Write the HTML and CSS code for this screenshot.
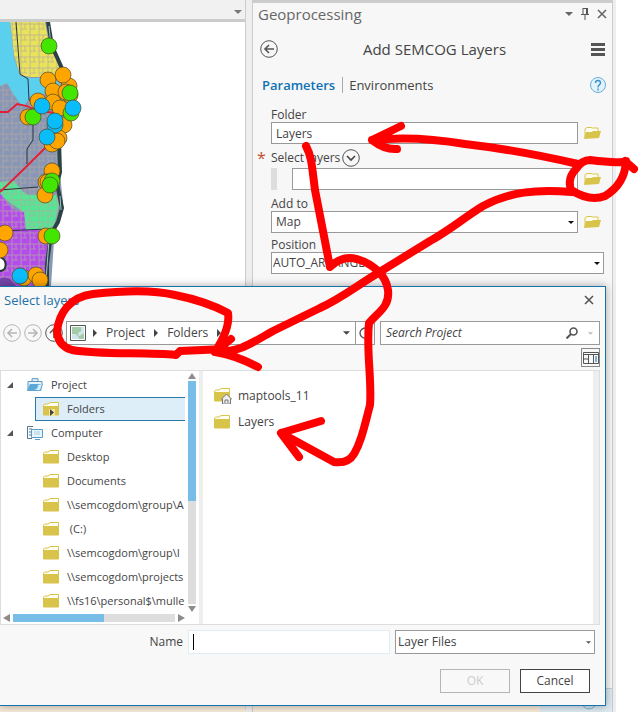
FILE: index.html
```html
<!DOCTYPE html>
<html lang="en">

<head>
    <meta charset="UTF-8">
    <meta name="viewport" content="width=device-width, initial-scale=1.0">
    <title>Geoprocessing</title>
    <link rel="stylesheet" href="styles.css">
</head>

<body>
    <!-- shared icons -->
    <svg class="defs" width="0" height="0">
        <symbol id="folder" viewBox="0 0 16 14">
            <path d="M.5 13V3L2 2h3l2-1.500h8.500V13z" fill="#fffdf0" stroke="#d8c44a" />
            <path d="M0 4h16v9H0z" fill="#d8c44a" />
        </symbol>
        <symbol id="folder-open" viewBox="0 0 17 14">
            <path d="M1 12V3l2-1.500h4L8.500 2H14v4" fill="#fffdf0" stroke="#d8c44a" />
            <path d="M0 13L2 6h6l1-1h8l-2 7z" fill="#d8c44a" />
        </symbol>
        <symbol id="down" viewBox="0 0 8 4">
            <path d="M0 0h8L4 4z" fill="currentColor" />
        </symbol>
        <symbol id="right" viewBox="0 0 4 8">
            <path d="M0 0l4 4-4 4z" fill="currentColor" />
        </symbol>
        <symbol id="arrow" viewBox="0 0 18 18">
            <circle cx="9" cy="9" r="8.300" fill="none" stroke="currentColor" />
            <path d="M14 9H5M9 5L5 9 9 13" fill="none" stroke="currentColor" stroke-width="1.600" />
        </symbol>
        <symbol id="close" viewBox="0 0 10 10">
            <path d="M1 1l8 8M9 1L1 9" stroke="currentColor" stroke-width="1.600" />
        </symbol>
    </svg>

    <div class="app">
        <div class="map-view">
            <div class="map-tabs"><svg width="8" height="4"><use href="#down" /></svg></div>
            <svg class="map" width="90" height="264" viewBox="0 22 90 264">
                <defs>
                    <pattern id="streets" width="9" height="11" patternUnits="userSpaceOnUse">
                        <path d="M0 2h9M3 0v11M7 2v5M3 7h6" fill="none" stroke="#b5a9a0" stroke-width=".7" />
                    </pattern>
                </defs>
                <path d="M0 22h48l6 26 10 20 10 30-8 20-6 20-1 30 2 16 2 18-8 24-4 60H0z" fill="#8797b5" />
                <path d="M10 22h35l5 27 12 18-7 10H30l-10-2-6-20z" fill="#e9e35a" />
                <path d="M0 182l14-1 8 10 6 4h28l3 10-6 25-30 0-2-20-12-8-9-8z" fill="#55e695" />
                <path d="M0 193l12 16 12 3 2 18h22l-2 56H0z" fill="#b44cec" />
                <path d="M0 22h48l6 26 10 20 8 30-12 40-1 30 2 16-2 38-11 28-2 56H0z" fill="url(#streets)" />
                <path d="M0 22h10l4 36 6 18 10 2h25l6 8-10 6-21 5-7 10-9-12-7-12-7 3z" fill="#5bd0ee" />
                <path d="M16 22l4 52 8 5 1 21 5 5M33 110v30l-6 9v15M0 190l38-3M0 231l48-2" fill="none" stroke="#2b3440" />
                <path d="M48 22l4 24 8 18 8 20M59 140l1 32-3 12 5 24-4 14-7 12-4 30v22" fill="none" stroke="#2c4145" stroke-width="4" />
                <path d="M49 26l2 20M60 196l1 14M49 240l-3 40" stroke="#a3c3bd" stroke-width="1" />
                <path d="M0 112h8l9-8 10 2 10 5 20 2M0 192l25-24 22-22" fill="none" stroke="#e31e36" stroke-width="1.800" />
                <path d="M0 257c8 3 7 14 0 14" fill="#fff" stroke="#26323a" stroke-width="2" />
                <path d="M0 279q8-5 16 7H0z" fill="#7444a8" />
                <g stroke="#4d4928" stroke-width=".7">
                    <g fill="#ffa500">
                        <circle cx="69" cy="86" r="8" /><circle cx="63" cy="75" r="8" /><circle cx="48" cy="80" r="8" />
                        <circle cx="70" cy="95" r="8" /><circle cx="53" cy="91" r="8" /><circle cx="66" cy="92" r="8" />
                        <circle cx="38" cy="101" r="8" /><circle cx="53" cy="102" r="8" /><circle cx="60" cy="108" r="8" />
                        <circle cx="28" cy="117" r="8" /><circle cx="64" cy="125" r="8" /><circle cx="59" cy="138" r="8" />
                        <circle cx="52" cy="144" r="8" /><circle cx="57" cy="141" r="8" /><circle cx="52" cy="171" r="8" />
                        <circle cx="46" cy="182" r="8" /><circle cx="45" cy="195" r="8" /><circle cx="48" cy="182" r="8" />
                        <circle cx="5" cy="233" r="8" /><circle cx="0" cy="250" r="8" /><circle cx="46" cy="236" r="8" />
                        <circle cx="24" cy="278" r="8" /><circle cx="36" cy="275" r="8" /><circle cx="40" cy="280" r="8" />
                    </g>
                    <g fill="#43e600">
                        <circle cx="49" cy="46" r="8" /><circle cx="70" cy="93" r="8" /><circle cx="71" cy="113" r="8" />
                        <circle cx="33" cy="117" r="8" /><circle cx="52" cy="181" r="8" /><circle cx="50" cy="185" r="8" />
                        <circle cx="52" cy="236" r="8" />
                    </g>
                    <g fill="#09bdfb">
                        <circle cx="42" cy="106" r="8" /><circle cx="73" cy="108" r="8" /><circle cx="55" cy="125" r="8" />
                        <circle cx="55" cy="121" r="8" /><circle cx="47" cy="137" r="8" /><circle cx="20" cy="276" r="8" />
                    </g>
                </g>
            </svg>
        </div>

        <div class="pane">
            <div class="pane-title">
                <h1>Geoprocessing</h1>
                <svg width="8" height="4"><use href="#down" /></svg>
                <svg width="8" height="12" viewBox="0 0 8 12"><path d="M2 0v6M2 .5h4M0 6.500h8M4 7v5" fill="none" stroke="#555" /><path d="M5 0h2v6H5z" fill="#555" /></svg>
                <svg width="10" height="10"><use href="#close" /></svg>
            </div>
            <div class="tool-title">
                <button class="icon-btn" aria-label="Back"><svg width="18" height="18"><use href="#arrow" /></svg></button>
                <h2>Add SEMCOG Layers</h2>
                <button class="icon-btn" aria-label="Menu"><svg width="14" height="13" viewBox="0 0 14 13"><path d="M0 1.500h14M0 6.500h14M0 11.500h14" stroke="#555" stroke-width="3" /></svg></button>
            </div>
            <div class="tabs">
                <a class="active" href="#">Parameters</a>
                <a href="#">Environments</a>
                <button class="icon-btn help" aria-label="Help"><svg width="16" height="16" viewBox="0 0 16 16"><circle cx="8" cy="8" r="7.500" fill="#e2f3fc" stroke="#6aaed6" /><path d="M5.500 6q0-2.500 2.500-2.500T10.500 6q0 1-1.200 1.800T8 10v.5M8 11.500v2" fill="none" stroke="#3b93c9" stroke-width="1.400" /></svg></button>
            </div>
            <form class="params">
                <label for="folder-in">Folder</label>
                <div class="field">
                    <input id="folder-in" type="text" value="Layers">
                    <button type="button" class="icon-btn" aria-label="Browse folder"><svg width="17" height="14"><use href="#folder-open" /></svg></button>
                </div>
                <div class="label-row">
                    <span class="required">*</span>
                    <label for="layers-in">Select layers</label>
                    <svg width="18" height="18" viewBox="0 0 18 18"><circle cx="9" cy="9" r="8.300" fill="none" stroke="#555" /><path d="M5 7l4 4 4-4" fill="none" stroke="#444" stroke-width="1.600" /></svg>
                </div>
                <div class="field">
                    <span class="grip"></span>
                    <input id="layers-in" type="text">
                    <button type="button" class="icon-btn" aria-label="Browse layers"><svg width="17" height="14"><use href="#folder-open" /></svg></button>
                </div>
                <label for="add-to">Add to</label>
                <div class="field">
                    <div class="select">
                        <select id="add-to"><option>Map</option></select>
                        <svg width="6" height="3"><use href="#down" /></svg>
                    </div>
                    <button type="button" class="icon-btn" aria-label="Browse map"><svg width="17" height="14"><use href="#folder-open" /></svg></button>
                </div>
                <label for="position">Position</label>
                <div class="select tight">
                    <select id="position"><option>AUTO_ARRANGE</option></select>
                    <svg width="6" height="3"><use href="#down" /></svg>
                </div>
            </form>
            <div class="pane-foot">
                <svg width="16" height="16" viewBox="0 0 16 16"><circle cx="8" cy="8" r="7" fill="#cfe6f2" stroke="#7db4d6" /></svg>
            </div>
        </div>
    </div>

    <div class="dialog" role="dialog" aria-label="Select layers">
        <div class="dialog-title">
            <h3>Select layers</h3>
            <button class="icon-btn" aria-label="Close"><svg width="10" height="10"><use href="#close" /></svg></button>
        </div>

        <div class="nav">
            <button class="icon-btn off" aria-label="Back"><svg width="18" height="18"><use href="#arrow" /></svg></button>
            <button class="icon-btn off" aria-label="Forward"><svg class="flip" width="18" height="18"><use href="#arrow" /></svg></button>
            <button class="icon-btn" aria-label="Up"><svg class="up" width="18" height="18"><use href="#arrow" /></svg></button>
            <div class="path">
                <svg width="16" height="16" viewBox="0 0 16 16"><path d="M.5.500h15v15H.5z" fill="#a3cba8" stroke="#555" /><path d="M2 9h4l2 3 6-4V2h-3v4L8 8l1 6H2z" fill="#cfe5ea" /><path d="M1.500 1.500h13v13h-13z" fill="none" stroke="#fff" /></svg>
                <svg width="4" height="8"><use href="#right" /></svg>
                <span>Project</span>
                <svg width="4" height="8"><use href="#right" /></svg>
                <span>Folders</span>
                <svg width="4" height="8"><use href="#right" /></svg>
                <svg class="path-drop" width="7" height="4"><use href="#down" /></svg>
                <button class="icon-btn refresh" aria-label="Refresh"><svg width="12" height="12" viewBox="0 0 12 12"><path d="M9 2a5 5 0 1 0 2 5M9 0v3H6" fill="none" stroke="#555" stroke-width="1.400" /></svg></button>
            </div>
            <div class="search">
                <input type="text" placeholder="Search Project" aria-label="Search Project">
                <svg width="12" height="12" viewBox="0 0 12 12"><circle cx="7.500" cy="4.500" r="3.500" fill="none" stroke="#555" stroke-width="1.600" /><path d="M5 7L.5 11.500" stroke="#555" stroke-width="2" /></svg>
                <svg class="faint" width="5" height="3"><use href="#down" /></svg>
            </div>
        </div>

        <div class="view-row">
            <button class="view-btn" aria-label="Columns"><svg width="16" height="12" viewBox="0 0 16 12"><path d="M.5.500h15v11H.5zM0 2.500h16M5.500 3v9M10.500 3v9M0 7h5" fill="none" stroke="#555" /><path d="M12 4h2v6h-2z" fill="#7fb2da" /></svg></button>
        </div>

        <div class="browser">
            <div class="side">
                <div class="side-main">
                    <ul class="tree">
                        <li class="top"><svg width="6" height="6" viewBox="0 0 6 6"><path d="M6 0v6H0z" fill="#555" /></svg><svg width="16" height="14" viewBox="0 0 16 14"><path d="M5 3V.7h6V3M1 13V3.500h14V6" fill="#e5f3fb" stroke="#5b94bd" /><path d="M0 13l3-7h13l-2 7z" fill="#5ba7d8" /><path d="M6 12q5 0 5-5l4-1-2 6z" fill="#d6edf9" /></svg>Project</li>
                        <li class="selected"><svg width="16" height="14" viewBox="0 0 16 14"><use href="#folder" width="16" height="14" /><path d="M6 7h6v7H6z" fill="#f4e69b" /><path d="M7 7l4 3.500L7 14z" fill="#444" /></svg>Folders</li>
                        <li class="top"><svg width="6" height="6" viewBox="0 0 6 6"><path d="M6 0v6H0z" fill="#555" /></svg><svg width="16" height="14" viewBox="0 0 16 14"><path d="M6 .5H.5v12H5M2 3h3M2 6h2M2 9h2" fill="none" stroke="#597387" /><path d="M4.500 3.500h11v8h-11zM8 13.500h5" fill="#e6f5fc" stroke="#5b9bc8" /><path d="M7 6h6M7 8h6" stroke="#a8d1e8" /></svg>Computer</li>
                        <li><svg width="16" height="14"><use href="#folder" /></svg>Desktop</li>
                        <li><svg width="16" height="14"><use href="#folder" /></svg>Documents</li>
                        <li><svg width="16" height="14"><use href="#folder" /></svg>\\semcogdom\group\A</li>
                        <li><svg width="16" height="14"><use href="#folder" /></svg>&nbsp;(C:)</li>
                        <li><svg width="16" height="14"><use href="#folder" /></svg>\\semcogdom\group\I</li>
                        <li><svg width="16" height="14"><use href="#folder" /></svg>\\semcogdom\projects</li>
                        <li><svg width="16" height="14"><use href="#folder" /></svg>\\fs16\personal$\mulle</li>
                    </ul>
                    <div class="vbar">
                        <svg width="8" height="6" viewBox="0 0 8 6"><path d="M4 0l4 6H0z" fill="#8c8c8c" /></svg>
                        <div class="track"><div class="thumb"></div></div>
                        <svg width="8" height="6" viewBox="0 0 8 6"><path d="M0 0h8L4 6z" fill="#8c8c8c" /></svg>
                    </div>
                </div>
                <div class="hbar">
                    <svg width="7" height="8" viewBox="0 0 7 8"><path d="M7 0v8L0 4z" fill="#8c8c8c" /></svg>
                    <div class="track"><div class="thumb"></div></div>
                    <svg width="7" height="8" viewBox="0 0 7 8"><path d="M0 0v8l7-4z" fill="#8c8c8c" /></svg>
                </div>
            </div>
            <ul class="files">
                <li><svg width="18" height="16" viewBox="0 0 18 16"><use href="#folder" width="16" height="14" /><path d="M8.500 16v-5H7.500l5-5 5 5h-1v5z" fill="#eee" stroke="#777" /><path d="M11 15v-3h3v3" fill="none" stroke="#777" /></svg>maptools_11</li>
                <li><svg width="18" height="14" viewBox="0 0 18 14"><use href="#folder" width="16" height="14" /></svg>Layers</li>
            </ul>
        </div>

        <div class="name-row">
            <label for="name">Name</label>
            <div class="name-box"><input id="name" type="text"><span class="caret"></span></div>
            <div class="select type">
                <select aria-label="File type"><option>Layer Files</option></select>
                <svg width="5" height="3"><use href="#down" /></svg>
            </div>
        </div>
        <div class="actions">
            <button class="btn" disabled>OK</button>
            <button class="btn">Cancel</button>
        </div>
    </div>

    <!-- hand drawn marks over the windows -->
    <svg class="marks" width="638" height="712" viewBox="0 0 638 712">
        <path d="M578 164C530 153 500 148 465 144C430 138 400 137 372 140M401 126L372 140Q385 150 397 149" />
        <path d="M634 169L625 161Q624 164 590 160Q582 160 576 169Q567 178 571 190Q590 202 605 196Q625 184 626 161" />
        <path d="M572 192C535 189 510 192 483 206C465 217 450 230 430 241L378 273C355 287 340 299 320 308L273 331C250 344 240 352 215 352L231 339M215 352Q235 355 258 367" />
        <path d="M306 146C312 157 312 168 315 190L330 267C338 259 346 256 357 259C373 264 386 275 388 290C390 307 378 312 369 323C366 350 372 380 370 405C364 428 361 442 354 454Q348 464 334 462L281 433L321 421M281 433L299 457" />
        <path d="M218 347C224 337 230 325 228 313C213 305 195 299 175 295C150 289 120 291 93 294C69 297 59 314 57 331Q58 346 72 350C100 355 145 352 176 355L180 351L225 349" />
    </svg>
</body>

</html>
```
FILE: styles.css
```css
* {
    box-sizing: border-box;
    margin: 0;
    padding: 0;
}

body {
    position: relative;
    min-height: 100vh;
    background: #fff;
    color: #444;
    font-family: "Open Sans", "Noto Sans", sans-serif;
    font-size: 12px;
    line-height: 16px;
    overflow: hidden;
}

ul {
    list-style: none;
}

svg {
    display: block;
    flex: none;
}

.defs {
    position: absolute;
}

input,
select,
button {
    font: inherit;
    color: inherit;
    outline: none;
}

a {
    color: inherit;
    text-decoration: none;
}

h1,
h2,
h3 {
    font-weight: normal;
}

.icon-btn {
    display: flex;
    border: 0;
    background: none;
    color: #555;
}

/* main window */
.app {
    display: flex;
    height: 100vh;
    margin-right: 22px;
    padding-right: 3px;
    background: #eee;
}

.map-view {
    display: flex;
    flex-direction: column;
    flex: 1;
    margin-right: 6px;
    border-right: 1px solid #ccc;
    border-bottom: 8px solid #f6ead8;
    background: #fff;
}

.map-tabs {
    display: flex;
    justify-content: flex-end;
    align-items: center;
    height: 22px;
    padding: 4px 3px 0 0;
    border-bottom: 3px solid #ccc;
    background: #f1f1f1;
    color: #777;
}

.pane {
    display: flex;
    flex-direction: column;
    width: 361px;
    border: 1px solid #ccc;
    border-width: 3px 1px 0;
    background: #f7f7f7;
}

.pane-title {
    display: flex;
    align-items: center;
    gap: 8px;
    height: 22px;
    padding: 0 5px;
    color: #666;
}

.pane-title h1 {
    flex: 1;
    font-size: 15px;
    line-height: 20px;
}

.tool-title {
    display: flex;
    align-items: center;
    height: 48px;
    padding: 0 7px;
}

.tool-title h2 {
    flex: 1;
    font-size: 15px;
    line-height: 20px;
    text-align: center;
}

.tabs {
    display: flex;
    align-items: center;
    height: 24px;
    padding: 0 6px 0 9px;
    font-size: 13px;
}

.tabs a + a {
    margin-left: 7px;
    padding-left: 6px;
    border-left: 1px solid #aaa;
}

.tabs .active {
    color: #0e72b5;
    font-weight: 600;
}

.help {
    margin-left: auto;
}

.params {
    display: flex;
    flex-direction: column;
    padding: 10px 8px 0 18px;
}

.params > label {
    margin-bottom: -1px;
}

.field {
    display: flex;
    align-items: center;
    gap: 6px;
    margin-bottom: 4px;
    padding-right: 3px;
}

.params > .field:nth-of-type(3) {
    margin-bottom: 6px;
}

.field input,
.select {
    flex: 1;
    height: 22px;
    min-width: 0;
    padding: 0 4px;
    border: 1px solid #999;
    background: #fff;
}

.grip {
    width: 6px;
    height: 22px;
    margin-right: 9px;
    background: #ddd;
}

.label-row {
    display: flex;
    align-items: center;
    gap: 2px;
    height: 20px;
    margin-left: -14px;
}

.required {
    width: 12px;
    color: #c0502c;
    font-size: 16px;
}

.select {
    display: flex;
    align-items: center;
    padding-right: 3px;
    color: #444;
}

.select select {
    flex: 1;
    min-width: 0;
    border: 0;
    background: none;
    appearance: none;
}

.select svg {
    color: #111;
}

.select.tight {
    flex: none;
    padding-left: 1px;
}

.pane-foot {
    display: flex;
    justify-content: flex-end;
    height: 24px;
    margin-top: auto;
    padding: 5px 15px 0 0;
    border-top: 1px solid #ccc;
    background: linear-gradient(to right, #f6ead8 80%, #dce9f0 80%);
}

/* browse dialog */
.dialog {
    position: absolute;
    top: 286px;
    left: 0;
    right: 32px;
    border: 1px solid #1673ac;
    border-left: 0;
    background: #f8f8f8;
    box-shadow: 0 0 8px rgba(0, 0, 0, 0.35);
}

.dialog-title {
    display: flex;
    align-items: center;
    justify-content: space-between;
    height: 34px;
    padding: 0 11px 8px 4px;
}

.dialog-title h3 {
    color: #1c71a8;
    font-size: 13px;
}

.nav {
    display: flex;
    align-items: center;
    padding: 0 5px 0 3px;
    gap: 3px;
}

.nav .off {
    color: #b5b5b5;
}

.flip {
    transform: rotate(180deg);
}

.up {
    transform: rotate(90deg);
}

.path,
.search {
    display: flex;
    align-items: center;
    height: 24px;
    border: 1px solid #999;
    background: #fff;
}

.path {
    flex: 1;
    gap: 9px;
    padding-left: 3px;
}

.path svg {
    color: #444;
}

.path > svg:first-child {
    margin-right: -2px;
}

.path-drop {
    margin-left: auto;
}

.refresh {
    align-items: center;
    align-self: stretch;
    margin-left: -4px;
    padding: 0 3px;
    border-left: 1px solid #999;
}

.search {
    width: 220px;
    margin-left: 2px;
    padding: 0 6px 0 5px;
    gap: 10px;
}

.search input {
    flex: 1;
    min-width: 0;
    border: 0;
}

.search input::placeholder {
    color: #444;
    font-style: italic;
    opacity: 1;
}

.faint {
    color: #bbb;
}

.view-row {
    display: flex;
    justify-content: flex-end;
    height: 25px;
    padding: 3px 5px 0 0;
}

.view-btn {
    display: flex;
    align-items: center;
    justify-content: center;
    width: 19px;
    height: 19px;
    border: 1px solid #888;
    background: #f8f8f8;
}

.browser {
    display: flex;
    height: 255px;
    margin-right: 5px;
    border: 1px solid #ddd;
    background: #fff;
}

.side {
    display: flex;
    flex-direction: column;
    width: 202px;
    padding-right: 3px;
    border-right: 4px solid #eee;
}

.side-main {
    display: flex;
    height: 241px;
    padding-top: 2px;
}

.tree {
    flex: 1;
    min-width: 0;
    overflow: hidden;
    font-size: 11px;
}

.tree li {
    display: flex;
    align-items: center;
    gap: 8px;
    height: 24px;
    margin-left: 34px;
    padding-left: 8px;
    white-space: nowrap;
}

.tree .top {
    gap: 8px;
    margin-left: 0;
    padding-left: 6px;
}

.tree .top svg + svg {
    margin-left: 6px;
}

.tree .selected {
    padding-left: 7px;
    border: 1px solid #2679ab;
    border-right: 0;
    background: #ddeef8;
}

.vbar {
    display: flex;
    flex-direction: column;
    gap: 2px;
    margin-left: 3px;
}

.track {
    flex: 1;
    background: #ddd;
}

.thumb {
    background: #78bde8;
}

.vbar .thumb {
    height: 54%;
}

.hbar {
    display: flex;
    gap: 3px;
    height: 8px;
    margin: 2px 11px 0 2px;
}

.hbar .thumb {
    width: 56%;
    height: 100%;
}

.files {
    flex: 1;
    padding: 12px 11px;
    border-right: 6px solid #eee;
}

.files li {
    display: flex;
    align-items: center;
    gap: 6px;
    height: 26px;
}

.name-row {
    display: flex;
    align-items: center;
    justify-content: flex-end;
    gap: 5px;
    padding: 5px 10px 0 0;
}

.name-box {
    position: relative;
    width: 202px;
    height: 24px;
    border: 1px solid #e0edf5;
    background: #fff;
}

.name-box input {
    width: 100%;
    height: 22px;
    padding: 0 4px;
    border: 0;
    background: none;
}

.caret {
    position: absolute;
    top: 3px;
    left: 4px;
    width: 1px;
    height: 16px;
    background: #000;
}

.type {
    flex: none;
    width: 200px;
    height: 24px;
    padding-left: 2px;
}

.type svg {
    color: #555;
}

.actions {
    display: flex;
    justify-content: flex-end;
    gap: 10px;
    padding: 15px 15px 12px;
}

.btn {
    width: 70px;
    height: 24px;
    border: 1px solid #444;
    background: #fff;
}

.btn:disabled {
    border-color: #b5b5b5;
    background: #f8f8f8;
    color: #ccc;
}

.marks {
    position: absolute;
    top: 0;
    left: 0;
    fill: none;
    stroke: #f00;
    stroke-width: 8px;
    stroke-linecap: round;
    stroke-linejoin: round;
    pointer-events: none;
}
```
